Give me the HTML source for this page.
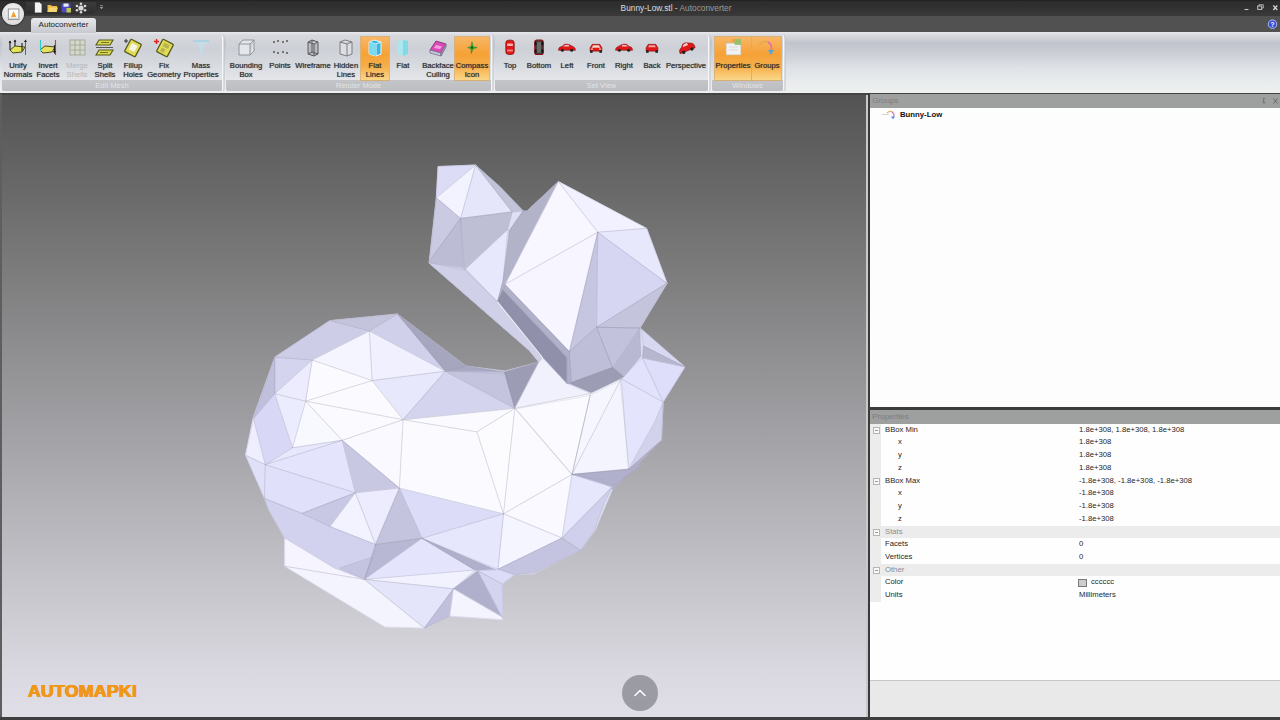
<!DOCTYPE html>
<html>
<head>
<meta charset="utf-8">
<title>Bunny-Low.stl - Autoconverter</title>
<style>
html,body{margin:0;padding:0;}
body{width:1280px;height:720px;overflow:hidden;position:relative;background:#3a3a3a;font-family:"Liberation Sans",sans-serif;font-size:8px;color:#222;}
.abs{position:absolute;}
#title{left:0;top:0;width:1280px;height:16px;background:linear-gradient(#1e1e1e 0%,#2c2c2c 8%,#303030 40%,#3a3a3a 100%);}
#tabrow{left:0;top:16px;width:1280px;height:17px;background:#515151;}
#titletext{left:560px;top:2px;width:232px;text-align:center;color:#dcdcdc;font-size:8.35px;line-height:12px;white-space:nowrap;}
#titletext span{color:#9a9a9a;}
#ribbon{left:0;top:32px;width:1280px;height:60.5px;background:linear-gradient(#e8e9ed 0%,#d8dae0 5%,#c1c4cc 18%,#cbced5 35%,#dfe2e6 60%,#e9eced 82%,#eef0f0 100%);}
#ribbonline{left:0;top:92.5px;width:1280px;height:2.5px;background:#444444;}
.grp{position:absolute;top:35px;height:56px;border-radius:2px;background:linear-gradient(#d6d8dd 0%,#cdd0d6 25%,#d6d9de 50%,#e4e6e9 80%);box-shadow:1.5px 0 0 #f6f6f8,2.5px 0 0 #bcbec4;}
.grp .lbl{position:absolute;left:0;right:0;bottom:0;height:11px;background:linear-gradient(#c3c5c8,#bbbdc1);color:#e2e3e6;font-size:7.5px;line-height:11px;text-align:center;border-radius:0 0 2px 2px;}
.btn{position:absolute;top:36.5px;height:43.5px;text-align:center;font-size:7.7px;line-height:9px;color:#303030;white-space:nowrap;}
.btn .t{position:absolute;width:80px;top:24px;text-align:center;text-shadow:0 0 0.7px rgba(40,40,40,.75);}
.btn.dis .t{color:#b4b6bb;text-shadow:none;}
.btn.on{background:linear-gradient(#f8b767 0%,#f5a136 40%,#f7b04c 70%,#fbd688 100%);box-shadow:0 0 0 0.8px #dba962;}
.ico{position:absolute;top:1px;width:22px;height:20px;margin-left:-11px;}
.ico svg{display:block;}
#tab{left:31px;top:18px;width:65px;height:15px;background:linear-gradient(#e8e9ec,#c6c9cf);border-radius:3px 3px 0 0;color:#222;font-size:8px;line-height:14px;text-align:center;}
#view{left:2px;top:95px;width:864px;height:622px;background:linear-gradient(#535353 0%,#6b6b6b 16.7%,#8d8d8f 40%,#aaa9ae 60%,#c2c1c7 76%,#dad9e1 93%,#e0dfe8 100%);}
#splitl{left:866px;top:95px;width:2px;height:622px;background:#c9c9cc;}
#splitd{left:868px;top:93px;width:2px;height:627px;background:#3a3a3a;}
#bottomline{left:0;top:717px;width:1280px;height:3px;background:#3e3e3e;}
#leftline{left:0;top:94px;width:2px;height:626px;background:#5e5e5e;}
#ghead{left:870px;top:94px;width:410px;height:14px;background:#9e9f9f;color:#7d7e7e;font-size:8px;line-height:13px;}
#gbody{left:870px;top:108px;width:410px;height:299px;background:#fdfdfd;}
#gline{left:868px;top:407px;width:412px;height:3px;background:#3c3c3c;}
#phead{left:870px;top:410px;width:410px;height:13.5px;background:#9e9f9f;color:#7d7e7e;font-size:8px;line-height:13px;}
#pbody{left:870px;top:423.5px;width:410px;height:256px;background:#fefefe;}
#pdesc{left:870px;top:679.5px;width:410px;height:37.5px;background:#e9e9e9;border-top:1px solid #c8c8c8;box-sizing:border-box;}
.prow{position:absolute;left:0;width:410px;height:12.73px;font-size:7.7px;line-height:12.7px;color:#1e1e1e;white-space:nowrap;}
.prow .n{position:absolute;left:15px;}
.prow .n2{position:absolute;left:28px;}
.prow .v{position:absolute;left:209px;}
.prow.cat{background:#ececec;color:#8c8c8c;}
.pm{position:absolute;left:3px;top:3px;width:5px;height:5px;border:1px solid #b5b5b5;background:#fafafa;}
.pm:after{content:"";position:absolute;left:1px;top:2px;width:3px;height:1px;background:#999;}
#pmargin{position:absolute;left:0;top:0;width:11px;height:178px;background:#ececec;}

#appbtn{left:1.5px;top:2.5px;width:22.5px;height:22.5px;border-radius:50%;background:radial-gradient(circle at 50% 40%,#f4f4f4 0%,#e2e2e2 60%,#c8c8c8 100%);box-shadow:0 0 1.5px 0.5px #222;}
#qat{left:26px;top:1.5px;width:70px;height:12px;border-radius:0 0 6px 0;background:linear-gradient(#3c3c3c,#2e2e2e);}
#logo{left:28px;top:681.5px;font-family:"Liberation Sans",sans-serif;font-weight:bold;font-size:16.6px;line-height:20px;color:#f0961a;letter-spacing:0.2px;transform-origin:0 50%;transform:scaleX(1.07);white-space:nowrap;text-shadow:0 0 0.6px #f0961a,0.55px 0 0 #f0961a,-0.55px 0 0 #f0961a,0 0.3px 0 #f0961a;}
#upbtn{left:622px;top:674.5px;width:36px;height:36px;border-radius:50%;background:#9b9ba3;}
#tree{left:900px;top:109px;font-weight:bold;font-size:7.75px;line-height:11px;color:#111;white-space:nowrap;}
.sw{display:inline-block;width:9px;height:8px;border:1px solid #7a7a7a;background:#cccccc;vertical-align:-2.5px;margin-right:4px;margin-left:-1px;box-sizing:border-box;}
</style>
</head>
<body>
<div id="title" class="abs"></div>
<div id="tabrow" class="abs"></div>
<div id="titletext" class="abs">Bunny-Low.stl - <span>Autoconverter</span></div>
<div id="ribbon" class="abs"></div>
<div id="ribbonline" class="abs"></div>

<div id="qat" class="abs"></div>
<div id="appbtn" class="abs"><svg width="23" height="23" viewBox="0 0 23 23" style="display:block"><rect x="6.3" y="6" width="10.6" height="10.6" fill="#fdfdfd" stroke="#8a8a8a" stroke-width="0.9"/><path d="M11.6 8L14.2 14H9Z" fill="#f4a030"/><path d="M7.5 15.2H15.7" stroke="#b8b8b8" stroke-width="0.8"/></svg></div>
<svg class="abs" style="left:30px;top:1px" width="80" height="14" viewBox="0 0 80 14">
<path d="M5 1.5H9.5L11.5 3.5V11.5H5Z" fill="#f4f4f4" stroke="#c8c8c8" stroke-width="0.4"/>
<path d="M17.5 4H21L22 5H27V11H17.5Z" fill="#e8b848"/><path d="M19 6.5H28L26.5 11H17.5Z" fill="#f4d470"/>
<rect x="31.500" y="2.500" width="9" height="9" rx="0.8" fill="#5048c0"/><rect x="33.500" y="2.500" width="5" height="3.200" fill="#ececf8"/><rect x="36.500" y="7" width="4.500" height="4.500" fill="#b8c850"/>
<g fill="#d8d8d8"><circle cx="51" cy="7" r="2.600"/><circle cx="51" cy="2.700" r="1.300"/><circle cx="51" cy="11.300" r="1.300"/><circle cx="47" cy="5" r="1.300"/><circle cx="55" cy="5" r="1.300"/><circle cx="47" cy="9.300" r="1.300"/><circle cx="55" cy="9.300" r="1.300"/></g>
<path d="M70 4.500H73M70.300 6.300H72.700L71.500 7.800Z" stroke="#b0b0b0" stroke-width="0.6" fill="#b0b0b0"/>
</svg>
<svg class="abs" style="left:1180px;top:0" width="100" height="32" viewBox="0 0 100 32">
<path d="M64.500 9.500H68.500" stroke="#c4c4c4" stroke-width="1.1"/>
<rect x="77.700" y="6" width="4" height="3.400" fill="none" stroke="#c4c4c4" stroke-width="1"/><path d="M79 6V4.700H83.300V8H82" fill="none" stroke="#c4c4c4" stroke-width="0.8"/>
<path d="M93.300 5.500L97.300 10M97.300 5.500L93.300 10" stroke="#d8d8d8" stroke-width="1.2"/>
<circle cx="92.500" cy="24.200" r="4.300" fill="#3a50d8" stroke="#b8c4f8" stroke-width="0.9"/>
<text x="92.500" y="26.800" font-family="Liberation Sans, sans-serif" font-weight="bold" font-size="6.500" fill="#ffffff" text-anchor="middle">?</text>
</svg>
<div id="tab" class="abs">Autoconverter</div>

<!-- RIBBON GROUPS -->
<div class="grp" style="left:2px;width:220px;"><div class="lbl">Edit Mesh</div></div>
<div class="grp" style="left:226px;width:265px;"><div class="lbl">Render Mode</div></div>
<div class="grp" style="left:495px;width:213px;"><div class="lbl">Set View</div></div>
<div class="grp" style="left:712px;width:71px;"><div class="lbl">Windows</div></div>

<!-- RIBBON BUTTONS -->
<!--RIBBON-->
<div class="btn" style="left:5px;width:26px;"><div class="ico" style="left:13px"><svg width="22" height="20" viewBox="0 0 22 20"><path d="M3 12 L8 8 L18 9 L15 14 L6 15 Z" fill="#e6e35a" stroke="#4a4a20" stroke-width="1"/><path d="M3 12V3M8 8V2M15 13V5" stroke="#222" stroke-width="1.1" fill="none"/><path d="M18.5 2V17" stroke="#e03030" stroke-width="1"/><path d="M1.6 5L3 2.4L4.4 5ZM6.6 4L8 1.4L9.4 4ZM17 4L18.5 1.4L20 4Z" fill="#222"/></svg></div><div class="t" style="left:-27px;">Unify<br>Normals</div></div>
<div class="btn" style="left:35px;width:26px;"><div class="ico" style="left:13px"><svg width="22" height="20" viewBox="0 0 22 20"><path d="M3 12 L8 8 L18 9 L15 14 L6 15 Z" fill="#e8e060" stroke="#4a4a20" stroke-width="1"/><path d="M3.5 2V13" stroke="#30c8c8" stroke-width="1.1"/><path d="M18.5 2V17" stroke="#e03030" stroke-width="1.1"/><path d="M17.5 7V14" stroke="#222" stroke-width="1.1"/><path d="M16 13L17.5 16L19 13Z" fill="#222"/></svg></div><div class="t" style="left:-27px;">Invert<br>Facets</div></div>
<div class="btn dis" style="left:64px;width:26px;"><div class="ico" style="left:13px"><svg width="22" height="20" viewBox="0 0 22 20"><rect x="4" y="2" width="15" height="15" fill="#d4d8c8" stroke="#a4a89c" stroke-width="0.9"/><path d="M9 2V17M14 2V17M4 7H19M4 12H19" stroke="#a4a89c" stroke-width="0.9"/></svg></div><div class="t" style="left:-27px;">Merge<br>Shells</div></div>
<div class="btn" style="left:92px;width:26px;"><div class="ico" style="left:13px"><svg width="22" height="20" viewBox="0 0 22 20"><path d="M5 2H19L16 7H2Z" fill="#d8d850" stroke="#5a5a1a" stroke-width="1.1"/><path d="M5 12H19L16 17H2Z" fill="#d8d850" stroke="#5a5a1a" stroke-width="1.1"/><path d="M2 9.5H19" stroke="#555" stroke-width="1"/><path d="M7 4.5H15M6 14.5H14" stroke="#5a5a1a" stroke-width="0.8"/></svg></div><div class="t" style="left:-27px;">Split<br>Shells</div></div>
<div class="btn" style="left:120px;width:26px;"><div class="ico" style="left:13px"><svg width="22" height="20" viewBox="0 0 22 20"><g transform="rotate(28 11 10)"><rect x="5" y="3" width="12" height="14" rx="1" fill="#e0dc58" stroke="#5a5a1a" stroke-width="1.3"/><rect x="8" y="6" width="6" height="7" fill="#f4f4e8"/></g><path d="M4 1V5M2 3H6" stroke="#222" stroke-width="0.9"/></svg></div><div class="t" style="left:-27px;">Fillup<br>Holes</div></div>
<div class="btn" style="left:151px;width:26px;"><div class="ico" style="left:13px"><svg width="22" height="20" viewBox="0 0 22 20"><g transform="rotate(28 12 10)"><rect x="6" y="3" width="12" height="14" rx="1" fill="#e0dc58" stroke="#5a5a1a" stroke-width="1.3"/><rect x="9" y="5.5" width="6" height="4" fill="#b8b450"/><rect x="9" y="11" width="4" height="4" fill="#b8b450"/></g><path d="M3.5 1V6M1 3.5H6" stroke="#e02020" stroke-width="1.4"/></svg></div><div class="t" style="left:-27px;">Fix<br>Geometry</div></div>
<div class="btn" style="left:188px;width:26px;"><div class="ico" style="left:13px"><svg width="22" height="20" viewBox="0 0 22 20"><path d="M3 3H19L13 9V16L10 15V9Z" fill="#c4dcea" opacity="0.85"/><path d="M3 3H19" stroke="#a8d0e4" stroke-width="1.6"/></svg></div><div class="t" style="left:-27px;">Mass<br>Properties</div></div>
<div class="btn" style="left:233px;width:26px;"><div class="ico" style="left:13px"><svg width="22" height="20" viewBox="0 0 22 20"><path d="M4 6H15V17H4ZM4 6L8 2H19L15 6M19 2V13L15 17" fill="#e4e6ea" stroke="#888c92" stroke-width="0.9"/></svg></div><div class="t" style="left:-27px;">Bounding<br>Box</div></div>
<div class="btn" style="left:267px;width:26px;"><div class="ico" style="left:13px"><svg width="22" height="20" viewBox="0 0 22 20"><g fill="#555"><circle cx="5" cy="4" r="1"/><circle cx="9" cy="3" r="1"/><circle cx="14" cy="4" r="1"/><circle cx="18" cy="3" r="1"/><circle cx="5" cy="14" r="1"/><circle cx="9" cy="15" r="1"/><circle cx="14" cy="14" r="1"/><circle cx="18" cy="15" r="1"/></g></svg></div><div class="t" style="left:-27px;">Points</div></div>
<div class="btn" style="left:300px;width:26px;"><div class="ico" style="left:13px"><svg width="22" height="20" viewBox="0 0 22 20"><path d="M6 4L10 2L16 4V16L12 18L6 16ZM10 2V14L6 16M10 14L16 16M12 6V18M6 4L12 6L16 4" fill="#b8bac0" stroke="#5a5c62" stroke-width="1"/></svg></div><div class="t" style="left:-27px;">Wireframe</div></div>
<div class="btn" style="left:333px;width:26px;"><div class="ico" style="left:13px"><svg width="22" height="20" viewBox="0 0 22 20"><path d="M5 4L10 2L17 4V16L12 18L5 16ZM12 6V18M5 4L12 6L17 4" fill="#dcdee2" stroke="#7a7c82" stroke-width="1"/></svg></div><div class="t" style="left:-27px;">Hidden<br>Lines</div></div>
<div class="btn on" style="left:361px;width:28px;"><div class="ico" style="left:14px"><svg width="22" height="20" viewBox="0 0 22 20"><path d="M5 4L10 2L17 4V16L12 18L5 16Z" fill="#38b8e0" stroke="#e8f4f8" stroke-width="1"/><path d="M12 6V18M5 4L12 6L17 4" stroke="#e8f4f8" stroke-width="1" fill="none"/><path d="M5 4L12 6V18L5 16Z" fill="#7adcf0"/></svg></div><div class="t" style="left:-26px;">Flat<br>Lines</div></div>
<div class="btn" style="left:390px;width:26px;"><div class="ico" style="left:13px"><svg width="22" height="20" viewBox="0 0 22 20"><path d="M6 3L11 2L16 3V16L11 18L6 16Z" fill="#a8e8f0" opacity="0.9"/><path d="M11 2L16 3V16L11 18Z" fill="#7cd8e8" opacity="0.9"/></svg></div><div class="t" style="left:-27px;">Flat</div></div>
<div class="btn" style="left:425px;width:26px;"><div class="ico" style="left:13px"><svg width="22" height="20" viewBox="0 0 22 20"><path d="M3 12L9 3L19 6L14 15Z" fill="#e048b8" stroke="#7a3a7a" stroke-width="0.9"/><path d="M3 12L14 15V18L3 15Z" fill="#c8c8d8" stroke="#70708a" stroke-width="0.8"/><path d="M14 15L19 6V9L14 18Z" fill="#9c9cb4" stroke="#70708a" stroke-width="0.8"/><path d="M9 7L15 8.5L13 11L7 10Z" fill="#f4a0e0"/></svg></div><div class="t" style="left:-27px;">Backface<br>Culling</div></div>
<div class="btn on" style="left:455px;width:34px;"><div class="ico" style="left:17px"><svg width="22" height="20" viewBox="-4 -3 30 27"><path d="M11 2L12.5 8.5L18 10L12.5 11.5L10 18L9.5 11.5L5 10L9.5 8.5Z" fill="#30b838" stroke="#1a7a22" stroke-width="0.6"/><circle cx="11" cy="10" r="1.5" fill="#0e4e14"/></svg></div><div class="t" style="left:-23px;">Compass<br>Icon</div></div>
<div class="btn" style="left:497px;width:26px;"><div class="ico" style="left:13px"><svg width="22" height="20" viewBox="-2 -1.5 26 23.6"><rect x="6" y="1" width="10" height="17" rx="3.5" fill="#e01818" stroke="#7a0808" stroke-width="0.8"/><rect x="7.5" y="5" width="7" height="3" rx="1" fill="#f8b0b0"/><rect x="7.5" y="12" width="7" height="2.5" rx="1" fill="#f08080"/></svg></div><div class="t" style="left:-27px;">Top</div></div>
<div class="btn" style="left:526px;width:26px;"><div class="ico" style="left:13px"><svg width="22" height="20" viewBox="-2 -1.5 26 23.6"><rect x="6" y="1" width="10" height="17" rx="2.5" fill="#3a3a3a" stroke="#8a1010" stroke-width="1.3"/><rect x="8.5" y="3" width="5" height="13" fill="#6a6a6a"/><rect x="6" y="3" width="2" height="4" fill="#111"/><rect x="14" y="3" width="2" height="4" fill="#111"/><rect x="6" y="12" width="2" height="4" fill="#111"/><rect x="14" y="12" width="2" height="4" fill="#111"/></svg></div><div class="t" style="left:-27px;">Bottom</div></div>
<div class="btn" style="left:554px;width:26px;"><div class="ico" style="left:13px"><svg width="22" height="20" viewBox="-2 -1.5 26 23.6"><g><path d="M1 12Q1 9 5 8.5L8 6Q12 5 15 7L19 9Q21 10 21 13H1Z" fill="#e01818" stroke="#7a0808" stroke-width="0.6"/><path d="M8.5 6.8L6.5 8.6H13.5L13 6.4Z" fill="#f8c0c0"/><circle cx="5.5" cy="13" r="1.8" fill="#222"/><circle cx="16.5" cy="13" r="1.8" fill="#222"/></g></svg></div><div class="t" style="left:-27px;">Left</div></div>
<div class="btn" style="left:583px;width:26px;"><div class="ico" style="left:13px"><svg width="22" height="20" viewBox="-2 -1.5 26 23.6"><path d="M4 14V10L6.5 6H15.5L18 10V14Z" fill="#e01818" stroke="#7a0808" stroke-width="0.6"/><path d="M7.5 7H14.5L16 10H6Z" fill="#f4d0d0"/><rect x="4" y="13" width="3" height="3" fill="#222"/><rect x="15" y="13" width="3" height="3" fill="#222"/><rect x="5" y="11" width="2.5" height="1.2" fill="#fff6c0"/><rect x="14.5" y="11" width="2.5" height="1.2" fill="#fff6c0"/></svg></div><div class="t" style="left:-27px;">Front</div></div>
<div class="btn" style="left:611px;width:26px;"><div class="ico" style="left:13px"><svg width="22" height="20" viewBox="-2 -1.5 26 23.6"><g transform="translate(22 0) scale(-1 1)"><path d="M1 12Q1 9 5 8.5L8 6Q12 5 15 7L19 9Q21 10 21 13H1Z" fill="#e01818" stroke="#7a0808" stroke-width="0.6"/><path d="M8.5 6.8L6.5 8.6H13.5L13 6.4Z" fill="#f8c0c0"/><circle cx="5.5" cy="13" r="1.8" fill="#222"/><circle cx="16.5" cy="13" r="1.8" fill="#222"/></g></svg></div><div class="t" style="left:-27px;">Right</div></div>
<div class="btn" style="left:639px;width:26px;"><div class="ico" style="left:13px"><svg width="22" height="20" viewBox="-2 -1.5 26 23.6"><path d="M4 14V10L6.5 6H15.5L18 10V14Z" fill="#e01818" stroke="#7a0808" stroke-width="0.6"/><path d="M7.5 7H14.5L15.5 9.5H6.5Z" fill="#f0a0a0"/><rect x="4" y="13" width="3" height="3" fill="#222"/><rect x="15" y="13" width="3" height="3" fill="#222"/></svg></div><div class="t" style="left:-27px;">Back</div></div>
<div class="btn" style="left:673px;width:26px;"><div class="ico" style="left:13px"><svg width="22" height="20" viewBox="-2 -1.5 26 23.6"><g transform="rotate(-22 11 10)"><path d="M2 13Q2 9 6 8L9 4.5Q13 3.5 16 6L20 8Q22 10 21 14H2Z" fill="#e01818" stroke="#7a0808" stroke-width="0.6"/><path d="M9.5 5.4L7.5 8H14.5L14 5Z" fill="#f8c8c8"/><circle cx="6.5" cy="14" r="2" fill="#222"/><circle cx="17" cy="14" r="2" fill="#222"/></g></svg></div><div class="t" style="left:-27px;">Perspective</div></div>
<div class="btn on" style="left:715px;width:36.5px;"><div class="ico" style="left:18px"><svg width="22" height="20" viewBox="0 0 22 20"><rect x="4" y="5" width="15" height="12" fill="#f2f2f4" stroke="#c8b890" stroke-width="0.8"/><path d="M7 9H16M7 12H16" stroke="#d8d8dc" stroke-width="1"/><path d="M10 1H19V7H13Z" fill="#8cc068" opacity="0.85"/><path d="M10 1H14V4H10Z" fill="#e8a050" opacity="0.9"/></svg></div><div class="t" style="left:-22px;">Properties</div></div>
<div class="btn on" style="left:752px;width:29px;"><div class="ico" style="left:15px"><svg width="22" height="20" viewBox="0 0 22 20"><path d="M3 7Q8 1 14 5" stroke="#e8a848" stroke-width="1.6" fill="none"/><path d="M12 4Q17 7 15 13" stroke="#e070b0" stroke-width="1.6" fill="none"/><path d="M12 12H18L15 17Z" fill="#48a8e0"/></svg></div><div class="t" style="left:-25px;">Groups</div></div>
<!--/RIBBON-->

<!-- VIEWPORT -->
<div id="view" class="abs"></div>
<!--BUNNY-->
<svg id="bunny" class="abs" style="left:0;top:0" width="1280" height="720" viewBox="0 0 1280 720">
<g stroke-linejoin="round">
<polygon points="438.0,166.5 475.6,165.0 523.0,211.0 527.0,211.0 558.4,181.6 646.6,228.4 667.0,283.5 640.0,328.0 642.5,332.0 684.7,366.6 663.0,402.0 661.0,440.6 612.5,489.4 595.0,530.6 580.0,550.3 534.0,573.8 514.4,574.7 502.0,584.0 503.0,619.7 449.7,616.0 424.4,628.0 385.0,627.0 284.7,566.2 284.7,538.0 268.8,510.0 264.4,498.0 245.6,455.0 253.0,418.0 274.7,357.2 330.0,320.6 397.5,314.0 466.0,366.0 505.0,371.0 538.8,362.0 529.4,350.6 429.0,263.0 436.3,197.8" fill="#dcdcf2" stroke="#dcdcf2" stroke-width="0.6"/>
<polygon points="438.1,166.5 475.6,165.0 436.3,197.8" fill="#dcdcf6" stroke="#dcdcf6" stroke-width="0.6"/>
<polygon points="475.6,165.0 436.3,197.8 460.6,218.4" fill="#f3f3ff" stroke="#f3f3ff" stroke-width="0.6"/>
<polygon points="475.6,165.0 460.6,218.4 512.2,211.9" fill="#e6e6fb" stroke="#e6e6fb" stroke-width="0.6"/>
<polygon points="475.6,165.0 500.0,186.6 523.4,210.9 512.2,211.9" fill="#c2c2d8" stroke="#c2c2d8" stroke-width="0.6"/>
<polygon points="436.3,197.8 460.6,218.4 429.7,260.6" fill="#cacae2" stroke="#cacae2" stroke-width="0.6"/>
<polygon points="460.6,218.4 429.7,260.6 428.8,262.5 463.4,270.0" fill="#bcbcd4" stroke="#bcbcd4" stroke-width="0.6"/>
<polygon points="460.6,218.4 512.2,211.9 507.5,229.7 464.4,270.0" fill="#bebed4" stroke="#bebed4" stroke-width="0.6"/>
<polygon points="507.5,229.7 464.4,270.0 497.5,301.9 503.0,281.0" fill="#e8e8fc" stroke="#e8e8fc" stroke-width="0.6"/>
<polygon points="512.2,211.9 523.0,211.0 509.4,230.6 507.5,229.7" fill="#dedef6" stroke="#dedef6" stroke-width="0.6"/>
<polygon points="523.0,211.0 527.0,211.0 558.4,181.6 505.0,284.5 497.5,301.9 503.0,281.0 509.4,230.6" fill="#b2b2c8" stroke="#b2b2c8" stroke-width="0.6"/>
<polygon points="429.0,263.0 464.7,268.1 497.5,301.9 542.5,357.5 538.8,362.2 529.4,350.6" fill="#d0d0e8" stroke="#d0d0e8" stroke-width="0.6"/>
<polygon points="558.4,181.6 597.8,232.2 505.0,284.7" fill="#f8f6ff" stroke="#f8f6ff" stroke-width="0.6"/>
<polygon points="558.4,181.6 597.8,232.2 646.6,228.4" fill="#f1f1ff" stroke="#f1f1ff" stroke-width="0.6"/>
<polygon points="597.8,232.2 646.6,228.4 667.2,283.8" fill="#e8e8fd" stroke="#e8e8fd" stroke-width="0.6"/>
<polygon points="504.7,284.1 597.7,232.3 569.4,351.6" fill="#f7f5ff" stroke="#f7f5ff" stroke-width="0.6"/>
<polygon points="597.7,232.3 596.6,327.2 569.4,351.6" fill="#c6c6e0" stroke="#c6c6e0" stroke-width="0.6"/>
<polygon points="597.7,232.3 666.9,283.1 596.6,327.2" fill="#d6d6f2" stroke="#d6d6f2" stroke-width="0.6"/>
<polygon points="596.6,327.2 666.9,283.1 639.7,328.1" fill="#c4c4dc" stroke="#c4c4dc" stroke-width="0.6"/>
<polygon points="569.4,351.6 596.6,327.2 612.5,367.5 571.3,382.5" fill="#bebed8" stroke="#bebed8" stroke-width="0.6"/>
<polygon points="596.6,327.2 639.7,328.1 640.6,356.3 623.8,376.9 612.5,367.5" fill="#b8b8d2" stroke="#b8b8d2" stroke-width="0.6"/>
<polygon points="596.6,327.2 639.7,328.1 612.5,367.5" fill="#c2c2dc" stroke="#c2c2dc" stroke-width="0.6"/>
<polygon points="567.5,382.5 571.3,382.5 612.5,367.5 623.8,376.9 591.9,392.8" fill="#9c9cb4" stroke="#9c9cb4" stroke-width="0.6"/>
<polygon points="497.5,301.9 503.0,290.0 566.9,357.5 566.9,383.8 542.5,357.5" fill="#9090aa" stroke="#9090aa" stroke-width="0.6"/>
<polygon points="503.0,290.0 505.0,284.5 569.4,351.6 571.2,382.5 566.9,383.8 566.9,357.5" fill="#b0b0c8" stroke="#b0b0c8" stroke-width="0.6"/>
<polygon points="641.2,328.8 685.0,367.0 643.5,346.0" fill="#d8d8f0" stroke="#d8d8f0" stroke-width="0.6"/>
<polygon points="643.5,346.0 685.0,367.0 642.5,358.0" fill="#b6b6ce" stroke="#b6b6ce" stroke-width="0.6"/>
<polygon points="642.5,358.0 685.0,367.0 663.1,402.0" fill="#dedefa" stroke="#dedefa" stroke-width="0.6"/>
<polygon points="621.5,379.0 642.5,358.0 663.1,402.0" fill="#e2e2fc" stroke="#e2e2fc" stroke-width="0.6"/>
<polygon points="621.5,379.0 663.1,402.0 661.5,440.4 628.5,469.4" fill="#e4e4fc" stroke="#e4e4fc" stroke-width="0.6"/>
<polygon points="663.1,402.0 661.5,440.4 628.5,469.4 654.7,421.9" fill="#d2d2ec" stroke="#d2d2ec" stroke-width="0.6"/>
<polygon points="590.0,395.6 620.0,380.6 629.4,468.8 572.2,474.4" fill="#f6f6ff" stroke="#f6f6ff" stroke-width="0.6"/>
<polygon points="515.9,408.8 590.0,395.6 572.2,474.4" fill="#fafaff" stroke="#fafaff" stroke-width="0.6"/>
<polygon points="572.2,474.4 629.4,468.8 661.3,440.6 612.5,489.4 601.3,480.0" fill="#b4b4cc" stroke="#b4b4cc" stroke-width="0.6"/>
<polygon points="330.0,320.6 397.5,314.0 369.4,331.0" fill="#c4c4dc" stroke="#c4c4dc" stroke-width="0.6"/>
<polygon points="274.7,357.2 330.0,320.6 369.4,331.0 312.2,360.0" fill="#cdcde7" stroke="#cdcde7" stroke-width="0.6"/>
<polygon points="397.5,314.0 369.4,331.0 445.3,371.2" fill="#d0d0ea" stroke="#d0d0ea" stroke-width="0.6"/>
<polygon points="397.5,314.0 466.0,366.0 445.3,371.2" fill="#a6a6be" stroke="#a6a6be" stroke-width="0.6"/>
<polygon points="445.3,371.2 466.0,366.0 504.5,372.0 504.0,374.0" fill="#a8a8c0" stroke="#a8a8c0" stroke-width="0.6"/>
<polygon points="369.4,331.0 312.2,360.0 372.2,380.6" fill="#f5f5ff" stroke="#f5f5ff" stroke-width="0.6"/>
<polygon points="369.4,331.0 372.2,380.6 445.3,371.2" fill="#f0f0ff" stroke="#f0f0ff" stroke-width="0.6"/>
<polygon points="312.2,360.0 372.2,380.6 305.6,401.2" fill="#fbfbff" stroke="#fbfbff" stroke-width="0.6"/>
<polygon points="372.2,380.6 445.3,371.2 403.1,419.7" fill="#e8e8fc" stroke="#e8e8fc" stroke-width="0.6"/>
<polygon points="372.2,380.6 305.6,401.2 403.1,419.7" fill="#fbfbff" stroke="#fbfbff" stroke-width="0.6"/>
<polygon points="274.7,357.2 312.2,360.0 274.7,393.8" fill="#d4d4ee" stroke="#d4d4ee" stroke-width="0.6"/>
<polygon points="312.2,360.0 305.6,401.2 274.7,393.8" fill="#ececfe" stroke="#ececfe" stroke-width="0.6"/>
<polygon points="274.7,357.2 274.7,393.8 253.5,418.5" fill="#c0c0dc" stroke="#c0c0dc" stroke-width="0.6"/>
<polygon points="253.5,418.5 274.7,393.8 292.5,447.8 265.3,464.7" fill="#d8d8f6" stroke="#d8d8f6" stroke-width="0.6"/>
<polygon points="274.7,393.8 305.6,401.2 292.5,447.8" fill="#ececff" stroke="#ececff" stroke-width="0.6"/>
<polygon points="245.6,455.3 253.5,418.5 265.3,464.7" fill="#eeeeff" stroke="#eeeeff" stroke-width="0.6"/>
<polygon points="245.6,455.3 265.3,464.7 264.4,498.4" fill="#e0e0f8" stroke="#e0e0f8" stroke-width="0.6"/>
<polygon points="305.6,401.2 403.1,419.7 342.2,440.3" fill="#fbfbff" stroke="#fbfbff" stroke-width="0.6"/>
<polygon points="305.6,401.2 342.2,440.3 292.5,447.8" fill="#f8f8ff" stroke="#f8f8ff" stroke-width="0.6"/>
<polygon points="403.1,419.7 399.4,488.1 342.2,440.3" fill="#f9f9ff" stroke="#f9f9ff" stroke-width="0.6"/>
<polygon points="342.2,440.3 399.4,488.1 355.3,492.8" fill="#c8c8e2" stroke="#c8c8e2" stroke-width="0.6"/>
<polygon points="292.5,447.8 342.2,440.3 265.3,464.7" fill="#e8e8fc" stroke="#e8e8fc" stroke-width="0.6"/>
<polygon points="265.3,464.7 342.2,440.3 355.3,492.8" fill="#e4e4fc" stroke="#e4e4fc" stroke-width="0.6"/>
<polygon points="265.3,464.7 355.3,492.8 301.9,513.4 264.4,498.4" fill="#e0e0fa" stroke="#e0e0fa" stroke-width="0.6"/>
<polygon points="355.3,492.8 301.9,513.4 330.0,526.6" fill="#c8c8e4" stroke="#c8c8e4" stroke-width="0.6"/>
<polygon points="355.3,492.8 330.0,526.6 375.5,544.5" fill="#f3f3ff" stroke="#f3f3ff" stroke-width="0.6"/>
<polygon points="355.3,492.8 399.4,488.1 375.5,544.5" fill="#ececfe" stroke="#ececfe" stroke-width="0.6"/>
<polygon points="399.4,488.1 375.5,544.5 422.0,538.3" fill="#c4c4de" stroke="#c4c4de" stroke-width="0.6"/>
<polygon points="399.4,488.1 503.5,513.8 422.0,538.3" fill="#dcdcf8" stroke="#dcdcf8" stroke-width="0.6"/>
<polygon points="445.3,371.2 504.5,372.0 514.8,408.3" fill="#c4c4de" stroke="#c4c4de" stroke-width="0.6"/>
<polygon points="445.3,371.2 514.8,408.3 403.1,419.7" fill="#d4d4ee" stroke="#d4d4ee" stroke-width="0.6"/>
<polygon points="504.5,372.0 538.8,362.2 514.8,408.3" fill="#9c9cb4" stroke="#9c9cb4" stroke-width="0.6"/>
<polygon points="538.8,362.2 542.5,357.5 566.9,383.8 590.6,393.5 514.8,408.3" fill="#f1f1fd" stroke="#f1f1fd" stroke-width="0.6"/>
<polygon points="403.1,419.7 476.9,431.9 503.5,513.8 399.4,488.1" fill="#fbfbff" stroke="#fbfbff" stroke-width="0.6"/>
<polygon points="403.1,419.7 514.8,408.3 476.9,431.9" fill="#fafaff" stroke="#fafaff" stroke-width="0.6"/>
<polygon points="476.9,431.9 514.8,408.3 503.5,513.8" fill="#fcfcff" stroke="#fcfcff" stroke-width="0.6"/>
<polygon points="514.8,408.3 571.9,474.5 503.5,513.8" fill="#fbfbff" stroke="#fbfbff" stroke-width="0.6"/>
<polygon points="514.8,408.3 590.6,393.5 571.9,474.5" fill="#fafaff" stroke="#fafaff" stroke-width="0.6"/>
<polygon points="590.6,393.5 621.0,379.0 571.9,474.5" fill="#f6f6ff" stroke="#f6f6ff" stroke-width="0.6"/>
<polygon points="621.0,379.0 628.5,469.4 571.9,474.5" fill="#f4f4ff" stroke="#f4f4ff" stroke-width="0.6"/>
<polygon points="571.9,474.5 628.5,469.4 645.0,462.0 612.2,486.9" fill="#b0b0cc" stroke="#b0b0cc" stroke-width="0.6"/>
<polygon points="571.9,474.5 612.2,486.9 562.0,538.0" fill="#e6e6fc" stroke="#e6e6fc" stroke-width="0.6"/>
<polygon points="612.2,486.9 604.0,503.5 593.5,532.0 580.5,550.4 562.0,538.0" fill="#d0d0ec" stroke="#d0d0ec" stroke-width="0.6"/>
<polygon points="503.5,513.8 571.9,474.5 562.0,538.0" fill="#f9f9ff" stroke="#f9f9ff" stroke-width="0.6"/>
<polygon points="503.5,513.8 562.0,538.0 498.0,569.2" fill="#f5f5ff" stroke="#f5f5ff" stroke-width="0.6"/>
<polygon points="562.0,538.0 580.5,550.4 535.0,572.5 514.4,574.7 498.0,569.2" fill="#c4c4e0" stroke="#c4c4e0" stroke-width="0.6"/>
<polygon points="422.0,538.3 503.5,513.8 498.0,569.2" fill="#e6e6fc" stroke="#e6e6fc" stroke-width="0.6"/>
<polygon points="264.4,498.4 301.9,513.4 330.0,526.6 375.5,544.5 372.8,556.9 364.4,579.4 334.4,568.0 284.7,538.0 268.8,510.0" fill="#d2d2ee" stroke="#d2d2ee" stroke-width="0.6"/>
<polygon points="340.0,568.0 372.8,556.9 364.4,579.4" fill="#c4c4e0" stroke="#c4c4e0" stroke-width="0.6"/>
<polygon points="375.5,544.5 422.0,538.3 364.4,579.4" fill="#b8b8d4" stroke="#b8b8d4" stroke-width="0.6"/>
<polygon points="422.0,538.3 475.0,570.0 364.4,579.4" fill="#e4e4fc" stroke="#e4e4fc" stroke-width="0.6"/>
<polygon points="422.0,538.3 495.6,570.0 475.0,570.0" fill="#b0b0cc" stroke="#b0b0cc" stroke-width="0.6"/>
<polygon points="364.4,579.4 475.0,570.0 453.4,588.8" fill="#f2f2ff" stroke="#f2f2ff" stroke-width="0.6"/>
<polygon points="284.7,538.0 334.4,568.0 364.4,579.4 284.7,566.2" fill="#f6f4ff" stroke="#f6f4ff" stroke-width="0.6"/>
<polygon points="284.7,566.2 364.4,579.4 424.4,628.0 385.0,627.0" fill="#f4f4ff" stroke="#f4f4ff" stroke-width="0.6"/>
<polygon points="364.4,579.4 453.4,588.8 424.4,628.0" fill="#e4e4fa" stroke="#e4e4fa" stroke-width="0.6"/>
<polygon points="453.4,588.8 449.7,616.0 424.4,628.0" fill="#c0c0dc" stroke="#c0c0dc" stroke-width="0.6"/>
<polygon points="477.8,570.4 498.0,569.2 514.4,574.7 502.2,584.0" fill="#dcdcf8" stroke="#dcdcf8" stroke-width="0.6"/>
<polygon points="453.4,588.8 477.8,571.0 502.2,616.9" fill="#b0b0cc" stroke="#b0b0cc" stroke-width="0.6"/>
<polygon points="477.8,571.0 502.2,584.0 503.1,619.7" fill="#d4d4f0" stroke="#d4d4f0" stroke-width="0.6"/>
<polygon points="453.4,588.8 502.2,616.9 503.1,619.7 449.7,616.0" fill="#f4f4ff" stroke="#f4f4ff" stroke-width="0.6"/>
</g>
<g fill="none" stroke="#8c8ca4" stroke-opacity="0.3" stroke-width="0.55" stroke-linejoin="round">
<polygon points="438.1,166.5 475.6,165.0 436.3,197.8"/>
<polygon points="475.6,165.0 436.3,197.8 460.6,218.4"/>
<polygon points="475.6,165.0 460.6,218.4 512.2,211.9"/>
<polygon points="475.6,165.0 500.0,186.6 523.4,210.9 512.2,211.9"/>
<polygon points="436.3,197.8 460.6,218.4 429.7,260.6"/>
<polygon points="460.6,218.4 429.7,260.6 428.8,262.5 463.4,270.0"/>
<polygon points="460.6,218.4 512.2,211.9 507.5,229.7 464.4,270.0"/>
<polygon points="507.5,229.7 464.4,270.0 497.5,301.9 503.0,281.0"/>
<polygon points="512.2,211.9 523.0,211.0 509.4,230.6 507.5,229.7"/>
<polygon points="523.0,211.0 527.0,211.0 558.4,181.6 505.0,284.5 497.5,301.9 503.0,281.0 509.4,230.6"/>
<polygon points="429.0,263.0 464.7,268.1 497.5,301.9 542.5,357.5 538.8,362.2 529.4,350.6"/>
<polygon points="558.4,181.6 597.8,232.2 505.0,284.7"/>
<polygon points="558.4,181.6 597.8,232.2 646.6,228.4"/>
<polygon points="597.8,232.2 646.6,228.4 667.2,283.8"/>
<polygon points="504.7,284.1 597.7,232.3 569.4,351.6"/>
<polygon points="597.7,232.3 596.6,327.2 569.4,351.6"/>
<polygon points="597.7,232.3 666.9,283.1 596.6,327.2"/>
<polygon points="596.6,327.2 666.9,283.1 639.7,328.1"/>
<polygon points="569.4,351.6 596.6,327.2 612.5,367.5 571.3,382.5"/>
<polygon points="596.6,327.2 639.7,328.1 640.6,356.3 623.8,376.9 612.5,367.5"/>
<polygon points="596.6,327.2 639.7,328.1 612.5,367.5"/>
<polygon points="567.5,382.5 571.3,382.5 612.5,367.5 623.8,376.9 591.9,392.8"/>
<polygon points="497.5,301.9 503.0,290.0 566.9,357.5 566.9,383.8 542.5,357.5"/>
<polygon points="503.0,290.0 505.0,284.5 569.4,351.6 571.2,382.5 566.9,383.8 566.9,357.5"/>
<polygon points="641.2,328.8 685.0,367.0 643.5,346.0"/>
<polygon points="643.5,346.0 685.0,367.0 642.5,358.0"/>
<polygon points="642.5,358.0 685.0,367.0 663.1,402.0"/>
<polygon points="621.5,379.0 642.5,358.0 663.1,402.0"/>
<polygon points="621.5,379.0 663.1,402.0 661.5,440.4 628.5,469.4"/>
<polygon points="663.1,402.0 661.5,440.4 628.5,469.4 654.7,421.9"/>
<polygon points="590.0,395.6 620.0,380.6 629.4,468.8 572.2,474.4"/>
<polygon points="515.9,408.8 590.0,395.6 572.2,474.4"/>
<polygon points="572.2,474.4 629.4,468.8 661.3,440.6 612.5,489.4 601.3,480.0"/>
<polygon points="330.0,320.6 397.5,314.0 369.4,331.0"/>
<polygon points="274.7,357.2 330.0,320.6 369.4,331.0 312.2,360.0"/>
<polygon points="397.5,314.0 369.4,331.0 445.3,371.2"/>
<polygon points="397.5,314.0 466.0,366.0 445.3,371.2"/>
<polygon points="445.3,371.2 466.0,366.0 504.5,372.0 504.0,374.0"/>
<polygon points="369.4,331.0 312.2,360.0 372.2,380.6"/>
<polygon points="369.4,331.0 372.2,380.6 445.3,371.2"/>
<polygon points="312.2,360.0 372.2,380.6 305.6,401.2"/>
<polygon points="372.2,380.6 445.3,371.2 403.1,419.7"/>
<polygon points="372.2,380.6 305.6,401.2 403.1,419.7"/>
<polygon points="274.7,357.2 312.2,360.0 274.7,393.8"/>
<polygon points="312.2,360.0 305.6,401.2 274.7,393.8"/>
<polygon points="274.7,357.2 274.7,393.8 253.5,418.5"/>
<polygon points="253.5,418.5 274.7,393.8 292.5,447.8 265.3,464.7"/>
<polygon points="274.7,393.8 305.6,401.2 292.5,447.8"/>
<polygon points="245.6,455.3 253.5,418.5 265.3,464.7"/>
<polygon points="245.6,455.3 265.3,464.7 264.4,498.4"/>
<polygon points="305.6,401.2 403.1,419.7 342.2,440.3"/>
<polygon points="305.6,401.2 342.2,440.3 292.5,447.8"/>
<polygon points="403.1,419.7 399.4,488.1 342.2,440.3"/>
<polygon points="342.2,440.3 399.4,488.1 355.3,492.8"/>
<polygon points="292.5,447.8 342.2,440.3 265.3,464.7"/>
<polygon points="265.3,464.7 342.2,440.3 355.3,492.8"/>
<polygon points="265.3,464.7 355.3,492.8 301.9,513.4 264.4,498.4"/>
<polygon points="355.3,492.8 301.9,513.4 330.0,526.6"/>
<polygon points="355.3,492.8 330.0,526.6 375.5,544.5"/>
<polygon points="355.3,492.8 399.4,488.1 375.5,544.5"/>
<polygon points="399.4,488.1 375.5,544.5 422.0,538.3"/>
<polygon points="399.4,488.1 503.5,513.8 422.0,538.3"/>
<polygon points="445.3,371.2 504.5,372.0 514.8,408.3"/>
<polygon points="445.3,371.2 514.8,408.3 403.1,419.7"/>
<polygon points="504.5,372.0 538.8,362.2 514.8,408.3"/>
<polygon points="538.8,362.2 542.5,357.5 566.9,383.8 590.6,393.5 514.8,408.3"/>
<polygon points="403.1,419.7 476.9,431.9 503.5,513.8 399.4,488.1"/>
<polygon points="403.1,419.7 514.8,408.3 476.9,431.9"/>
<polygon points="476.9,431.9 514.8,408.3 503.5,513.8"/>
<polygon points="514.8,408.3 571.9,474.5 503.5,513.8"/>
<polygon points="514.8,408.3 590.6,393.5 571.9,474.5"/>
<polygon points="590.6,393.5 621.0,379.0 571.9,474.5"/>
<polygon points="621.0,379.0 628.5,469.4 571.9,474.5"/>
<polygon points="571.9,474.5 628.5,469.4 645.0,462.0 612.2,486.9"/>
<polygon points="571.9,474.5 612.2,486.9 562.0,538.0"/>
<polygon points="612.2,486.9 604.0,503.5 593.5,532.0 580.5,550.4 562.0,538.0"/>
<polygon points="503.5,513.8 571.9,474.5 562.0,538.0"/>
<polygon points="503.5,513.8 562.0,538.0 498.0,569.2"/>
<polygon points="562.0,538.0 580.5,550.4 535.0,572.5 514.4,574.7 498.0,569.2"/>
<polygon points="422.0,538.3 503.5,513.8 498.0,569.2"/>
<polygon points="264.4,498.4 301.9,513.4 330.0,526.6 375.5,544.5 372.8,556.9 364.4,579.4 334.4,568.0 284.7,538.0 268.8,510.0"/>
<polygon points="340.0,568.0 372.8,556.9 364.4,579.4"/>
<polygon points="375.5,544.5 422.0,538.3 364.4,579.4"/>
<polygon points="422.0,538.3 475.0,570.0 364.4,579.4"/>
<polygon points="422.0,538.3 495.6,570.0 475.0,570.0"/>
<polygon points="364.4,579.4 475.0,570.0 453.4,588.8"/>
<polygon points="284.7,538.0 334.4,568.0 364.4,579.4 284.7,566.2"/>
<polygon points="284.7,566.2 364.4,579.4 424.4,628.0 385.0,627.0"/>
<polygon points="364.4,579.4 453.4,588.8 424.4,628.0"/>
<polygon points="453.4,588.8 449.7,616.0 424.4,628.0"/>
<polygon points="477.8,570.4 498.0,569.2 514.4,574.7 502.2,584.0"/>
<polygon points="453.4,588.8 477.8,571.0 502.2,616.9"/>
<polygon points="477.8,571.0 502.2,584.0 503.1,619.7"/>
<polygon points="453.4,588.8 502.2,616.9 503.1,619.7 449.7,616.0"/>
</g>
<g fill="none" stroke-linecap="round">
<polyline points="497.5,301.9 542.5,357.5" stroke="#f2f2fc" stroke-width="1.1"/>
</g>
</svg>
<!--/BUNNY-->

<div id="logo" class="abs">AUTOMAPKI</div>
<div id="upbtn" class="abs"><svg width="36" height="36" viewBox="0 0 36 36" style="display:block"><path d="M13 20.500L18 15.500L23 20.500" fill="none" stroke="#ffffff" stroke-width="1.500" stroke-linecap="round" stroke-linejoin="round"/></svg></div>
<div id="leftline" class="abs"></div>
<div id="splitl" class="abs"></div>
<div id="splitd" class="abs"></div>

<!-- RIGHT PANELS -->
<div id="ghead" class="abs">&nbsp;Groups</div>
<div id="gbody" class="abs"></div>
<svg class="abs" style="left:880px;top:108px" width="20" height="14" viewBox="0 0 20 14"><path d="M2 6.500H9" stroke="#c8c0b8" stroke-width="0.7"/><path d="M7 5Q10 2 13 4.500" stroke="#e8b050" stroke-width="1.1" fill="none"/><path d="M12 4Q15 6 13.500 9" stroke="#d070c0" stroke-width="1.100" fill="none"/><path d="M11 8.500H15L13 11.500Z" fill="#5890e8"/></svg>
<div id="tree" class="abs">Bunny-Low</div>
<svg class="abs" style="left:1258px;top:94px" width="22" height="14" viewBox="0 0 22 14"><path d="M5.500 4.500V8M4.300 8H7.700M6 8V10.500M4.800 4.500H7.200" stroke="#70727a" stroke-width="0.8" fill="none"/><path d="M15.500 4.500L19.500 9.500M19.500 4.500L15.500 9.500" stroke="#6a6c74" stroke-width="1"/></svg>
<svg class="abs" style="left:1258px;top:410px" width="22" height="14" viewBox="0 0 22 14"><path d="M5.500 4.500V8M4.300 8H7.700M6 8V10.500M4.800 4.500H7.200" stroke="#70727a" stroke-width="0.8" fill="none"/><path d="M15.500 4.500L19.500 9.500M19.500 4.500L15.500 9.500" stroke="#6a6c74" stroke-width="1"/></svg>
<div id="gline" class="abs"></div>
<div id="phead" class="abs">&nbsp;Properties</div>
<div id="pbody" class="abs">
<div id="pmargin"></div>
<div class="prow" style="top:0.20px"><span class="pm"></span><span class="n">BBox Min</span><span class="v">1.8e+308, 1.8e+308, 1.8e+308</span></div>
<div class="prow" style="top:12.93px"><span class="n2">x</span><span class="v">1.8e+308</span></div>
<div class="prow" style="top:25.66px"><span class="n2">y</span><span class="v">1.8e+308</span></div>
<div class="prow" style="top:38.39px"><span class="n2">z</span><span class="v">1.8e+308</span></div>
<div class="prow" style="top:51.12px"><span class="pm"></span><span class="n">BBox Max</span><span class="v">-1.8e+308, -1.8e+308, -1.8e+308</span></div>
<div class="prow" style="top:63.85px"><span class="n2">x</span><span class="v">-1.8e+308</span></div>
<div class="prow" style="top:76.58px"><span class="n2">y</span><span class="v">-1.8e+308</span></div>
<div class="prow" style="top:89.31px"><span class="n2">z</span><span class="v">-1.8e+308</span></div>
<div class="prow cat" style="top:102.04px"><span class="pm"></span><span class="n">Stats</span></div>
<div class="prow" style="top:114.77px"><span class="n">Facets</span><span class="v">0</span></div>
<div class="prow" style="top:127.50px"><span class="n">Vertices</span><span class="v">0</span></div>
<div class="prow cat" style="top:140.23px"><span class="pm"></span><span class="n">Other</span></div>
<div class="prow" style="top:152.96px"><span class="n">Color</span><span class="v"><span class="sw"></span>cccccc</span></div>
<div class="prow" style="top:165.69px"><span class="n">Units</span><span class="v">Millimeters</span></div>
</div>
<div id="pdesc" class="abs"></div>
<div id="bottomline" class="abs"></div>
</body>
</html>
